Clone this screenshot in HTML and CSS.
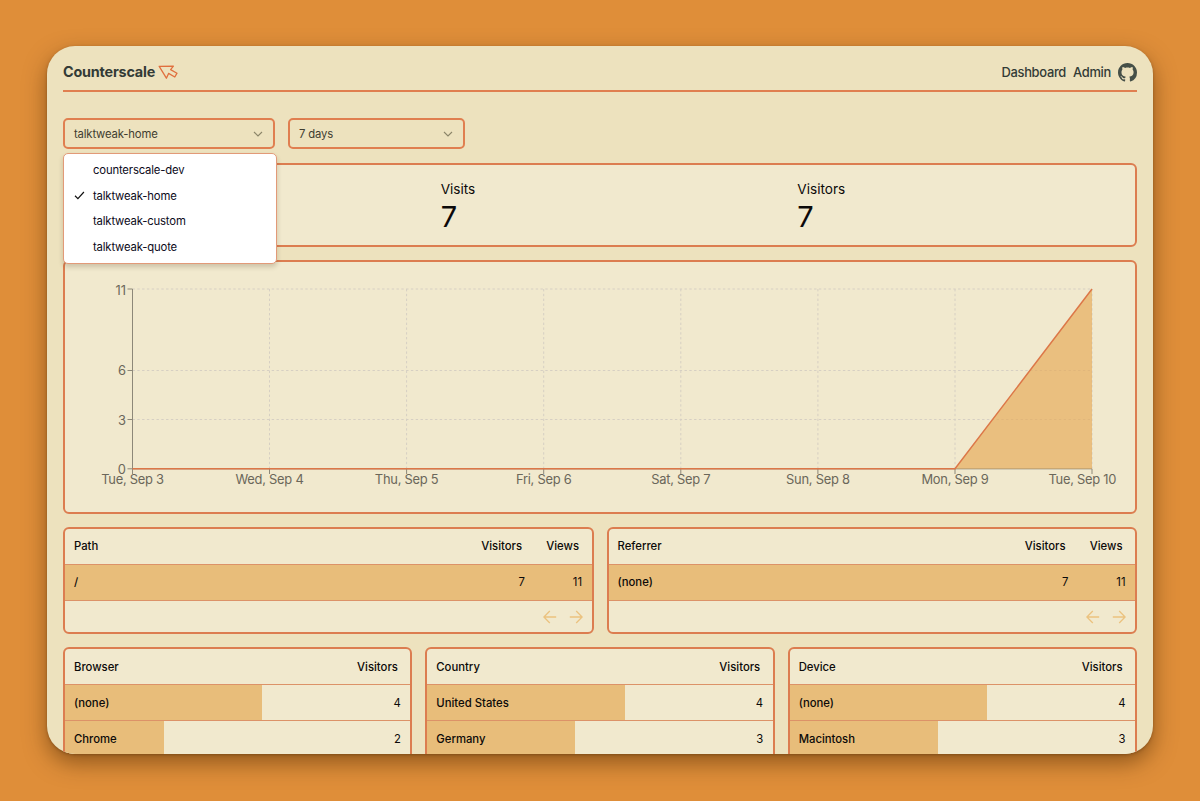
FILE: index.html
```html
<!DOCTYPE html>
<html lang="en">
<head>
<meta charset="utf-8">
<title>Counterscale</title>
<link rel="stylesheet" href="styles.css">
</head>
<body>
<div class="window">
  <header class="header">
    <div class="brand"><span>Counterscale</span>
      <svg class="brand-icon" width="20" height="14" viewBox="0 0 20 14"><path d="M1.2 1.4 L15.4 1.2 L12.6 4.6 L19 8.2 L16.8 12 L10.6 8.4 L8.4 13.2 Z"/></svg>
    </div>
    <nav class="nav">
      <span>Dashboard</span><span>Admin</span>
      <svg class="github" viewBox="0 0 16 16"><path d="M8 0C3.58 0 0 3.58 0 8c0 3.54 2.29 6.53 5.47 7.59.4.07.55-.17.55-.38 0-.19-.01-.82-.01-1.49-2.01.37-2.53-.49-2.69-.94-.09-.23-.48-.94-.82-1.13-.28-.15-.68-.52-.01-.53.63-.01 1.08.58 1.23.82.72 1.21 1.87.87 2.33.66.07-.52.28-.87.51-1.07-1.78-.2-3.64-.89-3.64-3.95 0-.87.31-1.59.82-2.15-.08-.2-.36-1.02.08-2.12 0 0 .67-.21 2.2.82.64-.18 1.32-.27 2-.27s1.36.09 2 .27c1.53-1.04 2.2-.82 2.2-.82.44 1.1.16 1.92.08 2.12.51.56.82 1.27.82 2.15 0 3.07-1.87 3.75-3.65 3.95.29.25.54.73.54 1.48 0 1.07-.01 1.93-.01 2.2 0 .21.15.46.55.38A8.01 8.01 0 0 0 16 8c0-4.42-3.58-8-8-8z"/></svg>
    </nav>
  </header>

  <div class="filters">
    <div class="select site"><span>talktweak-home</span>
      <svg class="chevron" viewBox="0 0 10 6"><path d="M1 1l4 4 4-4"/></svg>
      <div class="menu">
        <div class="option"><span class="tick"></span>counterscale-dev</div>
        <div class="option"><span class="tick"><svg width="11" height="9" viewBox="0 0 11 9"><path d="M1 4.8l2.9 2.8L9.9 1"/></svg></span>talktweak-home</div>
        <div class="option"><span class="tick"></span>talktweak-custom</div>
        <div class="option"><span class="tick"></span>talktweak-quote</div>
      </div>
    </div>
    <div class="select range"><span>7 days</span>
      <svg class="chevron" viewBox="0 0 10 6"><path d="M1 1l4 4 4-4"/></svg>
    </div>
  </div>

  <section class="card stats">
    <div></div>
    <div><div class="stat-label">Visits</div><div class="stat-value">7</div></div>
    <div><div class="stat-label">Visitors</div><div class="stat-value">7</div></div>
  </section>

  <section class="card chart">
    <svg width="1070" height="250" viewBox="65 262 1070 250">
      <g class="grid">
        <path d="M132.5 289H1092M132.5 370.5H1092M132.5 419.5H1092"/>
        <path d="M269.5 289V469M406.6 289V469M543.7 289V469M680.8 289V469M817.9 289V469M955 289V469M1092 289V469"/>
      </g>
      <g class="axis">
        <path d="M132.5 289V474M127.5 289H132.5M127.5 370.5H132.5M127.5 419.5H132.5M127.5 468.8H1092"/>
        <path d="M269.5 469V474M406.6 469V474M543.7 469V474M680.8 469V474M817.9 469V474M955 469V474M1092 469V474"/>
      </g>
      <path class="area" d="M955 468.8L1092 289V468.8Z"/>
      <path class="line" d="M132.5 468.8H955L1092 289"/>
      <g class="ticks end">
        <text x="126" y="295">11</text><text x="126" y="375">6</text><text x="126" y="424.5">3</text><text x="126" y="473.5">0</text>
      </g>
      <g class="ticks mid">
        <text x="132.5" y="484">Tue, Sep 3</text><text x="269.5" y="484">Wed, Sep 4</text><text x="406.6" y="484">Thu, Sep 5</text><text x="543.7" y="484">Fri, Sep 6</text><text x="680.8" y="484">Sat, Sep 7</text><text x="817.9" y="484">Sun, Sep 8</text><text x="955" y="484">Mon, Sep 9</text><text x="1082.3" y="484">Tue, Sep 10</text>
      </g>
    </svg>
  </section>

  <div class="row two">
    <section class="card table">
      <div class="tr th"><span class="name">Path</span><span class="num">Visitors</span><span class="num views">Views</span></div>
      <div class="tr"><i class="bar" style="width:100%"></i><span class="name">/</span><span class="num">7</span><span class="num views">11</span></div>
      <div class="pager"><svg viewBox="0 0 14 14"><path d="M13.2 7H1M6.8 1L.9 7l5.9 6"/></svg><svg viewBox="0 0 14 14"><path d="M.8 7H13M7.2 1l5.9 6-5.9 6"/></svg></div>
    </section>
    <section class="card table">
      <div class="tr th"><span class="name">Referrer</span><span class="num">Visitors</span><span class="num views">Views</span></div>
      <div class="tr"><i class="bar" style="width:100%"></i><span class="name">(none)</span><span class="num">7</span><span class="num views">11</span></div>
      <div class="pager"><svg viewBox="0 0 14 14"><path d="M13.2 7H1M6.8 1L.9 7l5.9 6"/></svg><svg viewBox="0 0 14 14"><path d="M.8 7H13M7.2 1l5.9 6-5.9 6"/></svg></div>
    </section>
  </div>

  <div class="row three">
    <section class="card table">
      <div class="tr th"><span class="name">Browser</span><span class="num">Visitors</span></div>
      <div class="tr"><i class="bar" style="width:57.14%"></i><span class="name">(none)</span><span class="num">4</span></div>
      <div class="tr"><i class="bar" style="width:28.57%"></i><span class="name">Chrome</span><span class="num">2</span></div>
    </section>
    <section class="card table">
      <div class="tr th"><span class="name">Country</span><span class="num">Visitors</span></div>
      <div class="tr"><i class="bar" style="width:57.14%"></i><span class="name">United States</span><span class="num">4</span></div>
      <div class="tr"><i class="bar" style="width:42.86%"></i><span class="name">Germany</span><span class="num">3</span></div>
    </section>
    <section class="card table">
      <div class="tr th"><span class="name">Device</span><span class="num">Visitors</span></div>
      <div class="tr"><i class="bar" style="width:57.14%"></i><span class="name">(none)</span><span class="num">4</span></div>
      <div class="tr"><i class="bar" style="width:42.86%"></i><span class="name">Macintosh</span><span class="num">3</span></div>
    </section>
  </div>
</div>
</body>
</html>
```
FILE: styles.css
```css
* { box-sizing: border-box; }
body {
  margin: 0;
  height: 801px;
  padding: 46px 47px 47px;
  overflow: hidden;
  background: #df8e39;
  font-family: Inter, "Liberation Sans", sans-serif;
  font-size: 11.3px;
  color: #0c0a09;
}
.window {
  height: 708px;
  padding: 0 16px;
  overflow: hidden;
  border-radius: 28px;
  background: #ede2be;
  box-shadow: 0 9px 22px rgba(70, 35, 0, .5), 0 1px 3px rgba(70, 35, 0, .35);
}
.header {
  display: flex;
  justify-content: space-between;
  align-items: center;
  height: 46px;
  padding-top: 7px;
  border-bottom: 2px solid #e07f50;
  color: #333b36;
}
.brand { display: flex; align-items: center; gap: 3px; font-size: 14.4px; font-weight: 700; letter-spacing: -.2px; }
.brand-icon { fill: none; stroke: #e0703f; stroke-width: 1.3; stroke-linejoin: round; }
.nav { display: flex; align-items: center; gap: 7px; padding-top: 1px; font-size: 12.9px; font-weight: 500; letter-spacing: -.3px; }
.nav span { padding-top: 1px; }
.github { width: 19px; height: 19px; fill: #465048; }

.filters { display: flex; gap: 13px; margin-top: 26px; }
.select {
  position: relative;
  display: flex;
  align-items: center;
  justify-content: space-between;
  height: 31px;
  padding: 0 10px 0 9px;
  border: 2px solid #e07f50;
  border-radius: 5px;
  color: #3f3d30;
  letter-spacing: -.16px;
}
.site { width: 212px; }
.range { width: 177px; }
.chevron { width: 10px; height: 6px; fill: none; stroke: #8c8669; stroke-width: 1.1; }
.menu {
  position: absolute;
  z-index: 2;
  top: 33px;
  left: -2px;
  width: 214px;
  height: 111px;
  padding: 3px;
  border: 1px solid #e29a78;
  border-radius: 5px;
  background: #fff;
  box-shadow: 0 3px 5px rgba(60, 40, 10, .2);
  color: #0c0a1a;
}
.option { display: flex; align-items: center; height: 25.8px; }
.tick { display: flex; width: 26px; padding-left: 7px; }
.tick svg { fill: none; stroke: #111; stroke-width: 1.2; }

.card { border: 2px solid #dc7d50; border-radius: 6px; background: #f1e9ce; }
.stats {
  display: grid;
  grid-template-columns: repeat(3, 1fr);
  height: 84px;
  margin-top: 14px;
  padding: 14px 0 0 0;
}
.stats > div { padding-left: 19px; }
.stat-label { font-size: 13.6px; line-height: 20px; }
.stat-value { font-size: 29px; line-height: 36px; }
.chart { height: 254px; margin-top: 13px; }
.chart svg { display: block; }
.grid { stroke: #d6cfc3; stroke-dasharray: 2.4 2.4; fill: none; }
.axis { stroke: #8d8879; fill: none; }
.area { fill: #e6a954; fill-opacity: .65; }
.line { fill: none; stroke: #dc7748; stroke-width: 1.5; }
.ticks { fill: #6b675a; font-size: 12.9px; }
.end { text-anchor: end; }
.mid { text-anchor: middle; letter-spacing: -.25px; }

.row { display: grid; gap: 13px; }
.two { grid-template-columns: repeat(2, 1fr); margin-top: 13px; }
.three { grid-template-columns: repeat(3, 1fr); margin-top: 13px; }
.table { overflow: hidden; }
.two .table { height: 108px; }
.tr {
  position: relative;
  display: flex;
  align-items: center;
  height: 36px;
  padding: 0 9.5px 1px 9px;
  border-bottom: 1px solid #dc9268;
}
.tr + .tr { height: 36.3px; }
.two .table { height: 107px; }
.three .tr { padding-top: 1px; padding-bottom: 0; }
.tr.th { font-weight: 500; }
.bar { position: absolute; z-index: 0; left: 0; top: 0; bottom: 0; background: #e8bd7a; }
.name { position: relative; flex: 1; font-weight: 500; }
.num { position: relative; text-align: right; }
.th .num { padding-right: 3px; }
.views { width: 57px; }
.pager { display: flex; justify-content: flex-end; gap: 12px; padding: 9px 9px 0 0; }
.pager svg { width: 14px; height: 14px; fill: none; stroke: #ebc27f; stroke-width: 1.3; }
```
